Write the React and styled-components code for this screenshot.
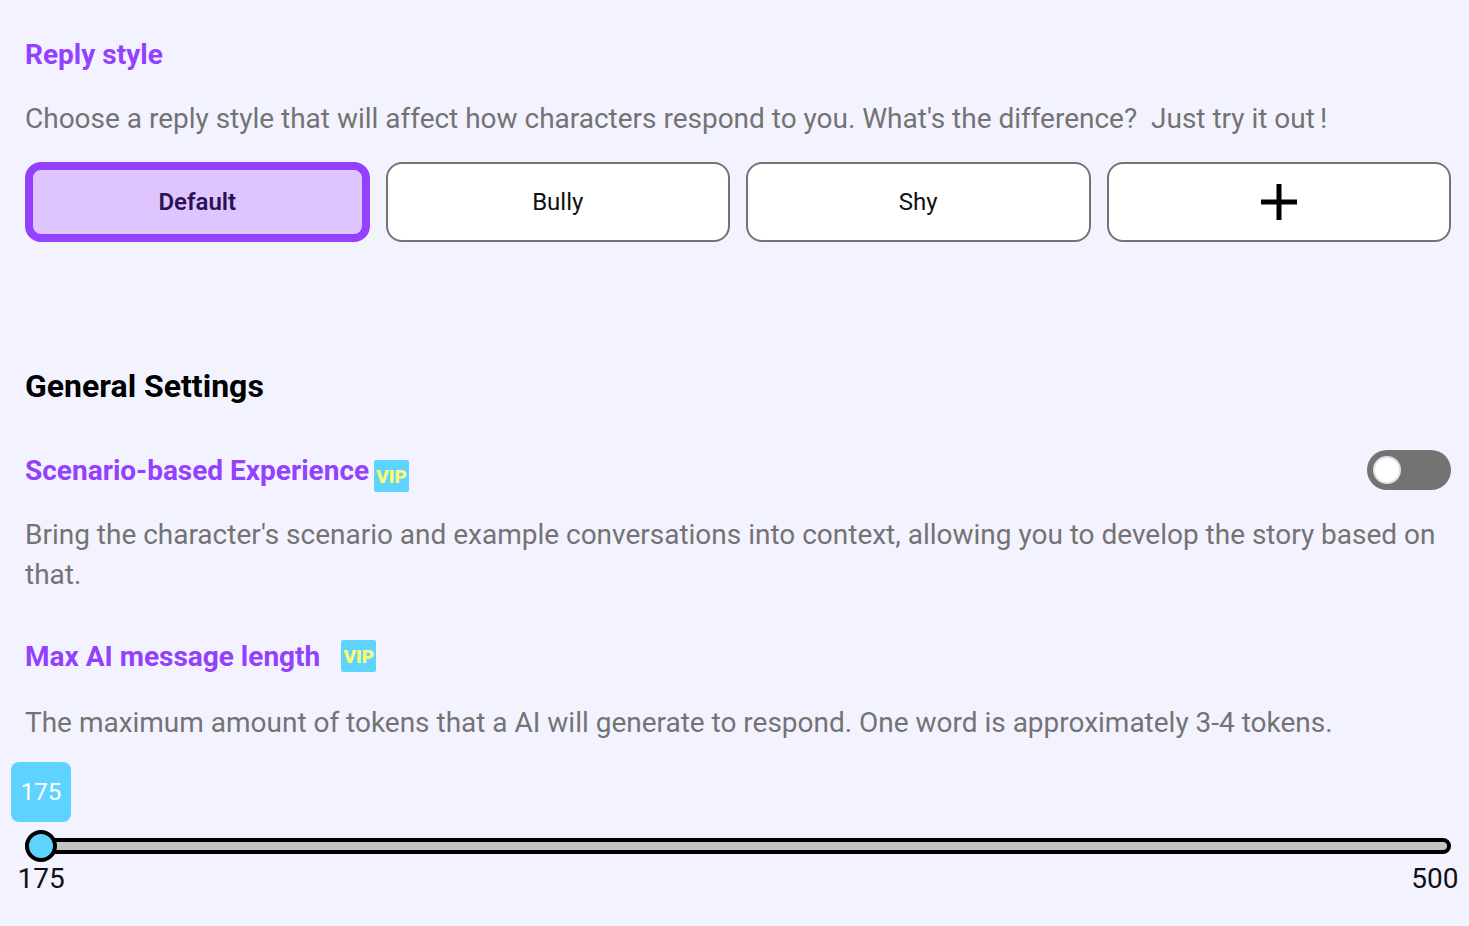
import React from "react";
import styled, { createGlobalStyle } from "styled-components";

const GlobalStyle = createGlobalStyle`
  html, body {
    margin: 0;
    padding: 0;
    background: #f3f3ff;
    font-family: Roboto, "Liberation Sans", sans-serif;
  }
`;

const Page = styled.div`
  box-sizing: border-box;
  width: 1469px;
  height: 926px;
  padding: 34px 18px 0 25px;
  overflow: hidden;
`;

const Title = styled.div`
  display: flex;
  align-items: center;
  height: 40px;
  font-size: 28px;
  font-weight: 700;
  color: #9340ff;
  white-space: nowrap;
`;

const Desc = styled.p`
  margin: ${({ $top }) => $top}px 0 0;
  font-size: 28px;
  line-height: 40px;
  letter-spacing: -0.01px;
  color: #737373;
`;

const Bang = styled.span`
  margin-left: 5px;
`;

const StyleRow = styled.div`
  display: grid;
  grid-template-columns: repeat(4, 1fr);
  gap: 16px;
  margin-top: 23px;
`;

const StyleButton = styled.div`
  box-sizing: border-box;
  height: 80px;
  display: flex;
  align-items: center;
  justify-content: center;
  font-size: 24px;
  border-radius: 16px;
  border: ${({ $active }) => ($active ? "8px solid #9340ff" : "2px solid #737373")};
  background: ${({ $active }) => ($active ? "#dfc5ff" : "#fff")};
  color: ${({ $active }) => ($active ? "#2c1255" : "#111")};
  font-weight: ${({ $active }) => ($active ? 600 : 400)};
`;

const SectionHead = styled.h2`
  margin: 124px 0 0;
  height: 40px;
  line-height: 40px;
  font-size: 32px;
  font-weight: 700;
  color: #000;
`;

const SpacedRow = styled.div`
  display: flex;
  align-items: center;
  justify-content: space-between;
  margin-top: 44px;
`;

const Vip = styled.span`
  box-sizing: border-box;
  display: inline-flex;
  align-items: center;
  justify-content: center;
  width: 35px;
  height: 32px;
  margin-left: ${({ $left }) => $left}px;
  position: relative;
  top: ${({ $top }) => $top}px;
  background: #5ed3ff;
  border-radius: 2px;
  color: #fbfb72;
  font-size: 19px;
  font-weight: 900;
`;

const Toggle = styled.div`
  box-sizing: border-box;
  width: 84px;
  height: 40px;
  padding: 6px;
  border-radius: 20px;
  background: #737373;
`;

const Knob = styled.div`
  box-sizing: border-box;
  width: 28px;
  height: 28px;
  border-radius: 50%;
  background: #fff;
  border: 2px solid #dfe3e6;
`;

const MaxTitle = styled(Title)`
  margin-top: 41px;
`;

const SliderWrap = styled.div`
  position: relative;
  margin-top: 95px;
`;

const Bubble = styled.div`
  position: absolute;
  left: -14px;
  top: -76px;
  width: 60px;
  height: 60px;
  display: flex;
  align-items: center;
  justify-content: center;
  border-radius: 8px;
  background: #5ed3ff;
  color: #fff;
  font-size: 24px;
`;

const Track = styled.div`
  box-sizing: border-box;
  height: 16px;
  border: 4px solid #000;
  border-radius: 8px;
  background: #c4c4c4;
`;

const Thumb = styled.div`
  position: absolute;
  left: 0;
  top: -8px;
  box-sizing: border-box;
  width: 32px;
  height: 32px;
  border: 4px solid #000;
  border-radius: 50%;
  background: #5ed3ff;
`;

const Labels = styled.div`
  display: flex;
  justify-content: space-between;
  margin: 9px -7.5px 0 -7.5px;
  font-size: 28px;
  line-height: 32px;
  color: #111;
`;

export default function App() {
  return (
    <Page>
      <GlobalStyle />
      <Title>Reply style</Title>
      <Desc $top={25}>
        Choose a reply style that will affect how characters respond to you. What's the difference?&nbsp; Just try it out<Bang>!</Bang>
      </Desc>
      <StyleRow>
        <StyleButton $active>Default</StyleButton>
        <StyleButton>Bully</StyleButton>
        <StyleButton>Shy</StyleButton>
        <StyleButton>
          <svg width="36" height="36" viewBox="0 0 36 36">
            <path d="M18 0v36M0 18h36" stroke="#000" strokeWidth="5" fill="none" />
          </svg>
        </StyleButton>
      </StyleRow>
      <SectionHead>General Settings</SectionHead>
      <SpacedRow>
        <Title>
          Scenario-based Experience
          <Vip $left={5} $top={6}>VIP</Vip>
        </Title>
        <Toggle>
          <Knob />
        </Toggle>
      </SpacedRow>
      <Desc $top={25}>
        Bring the character's scenario and example conversations into context, allowing you to develop the story based on that.
      </Desc>
      <MaxTitle>
        Max AI message length
        <Vip $left={21} $top={0}>VIP</Vip>
      </MaxTitle>
      <Desc $top={27}>
        The maximum amount of tokens that a AI will generate to respond. One word is approximately 3-4 tokens.
      </Desc>
      <SliderWrap>
        <Bubble>175</Bubble>
        <Track />
        <Thumb />
        <Labels>
          <span>175</span>
          <span>500</span>
        </Labels>
      </SliderWrap>
    </Page>
  );
}
